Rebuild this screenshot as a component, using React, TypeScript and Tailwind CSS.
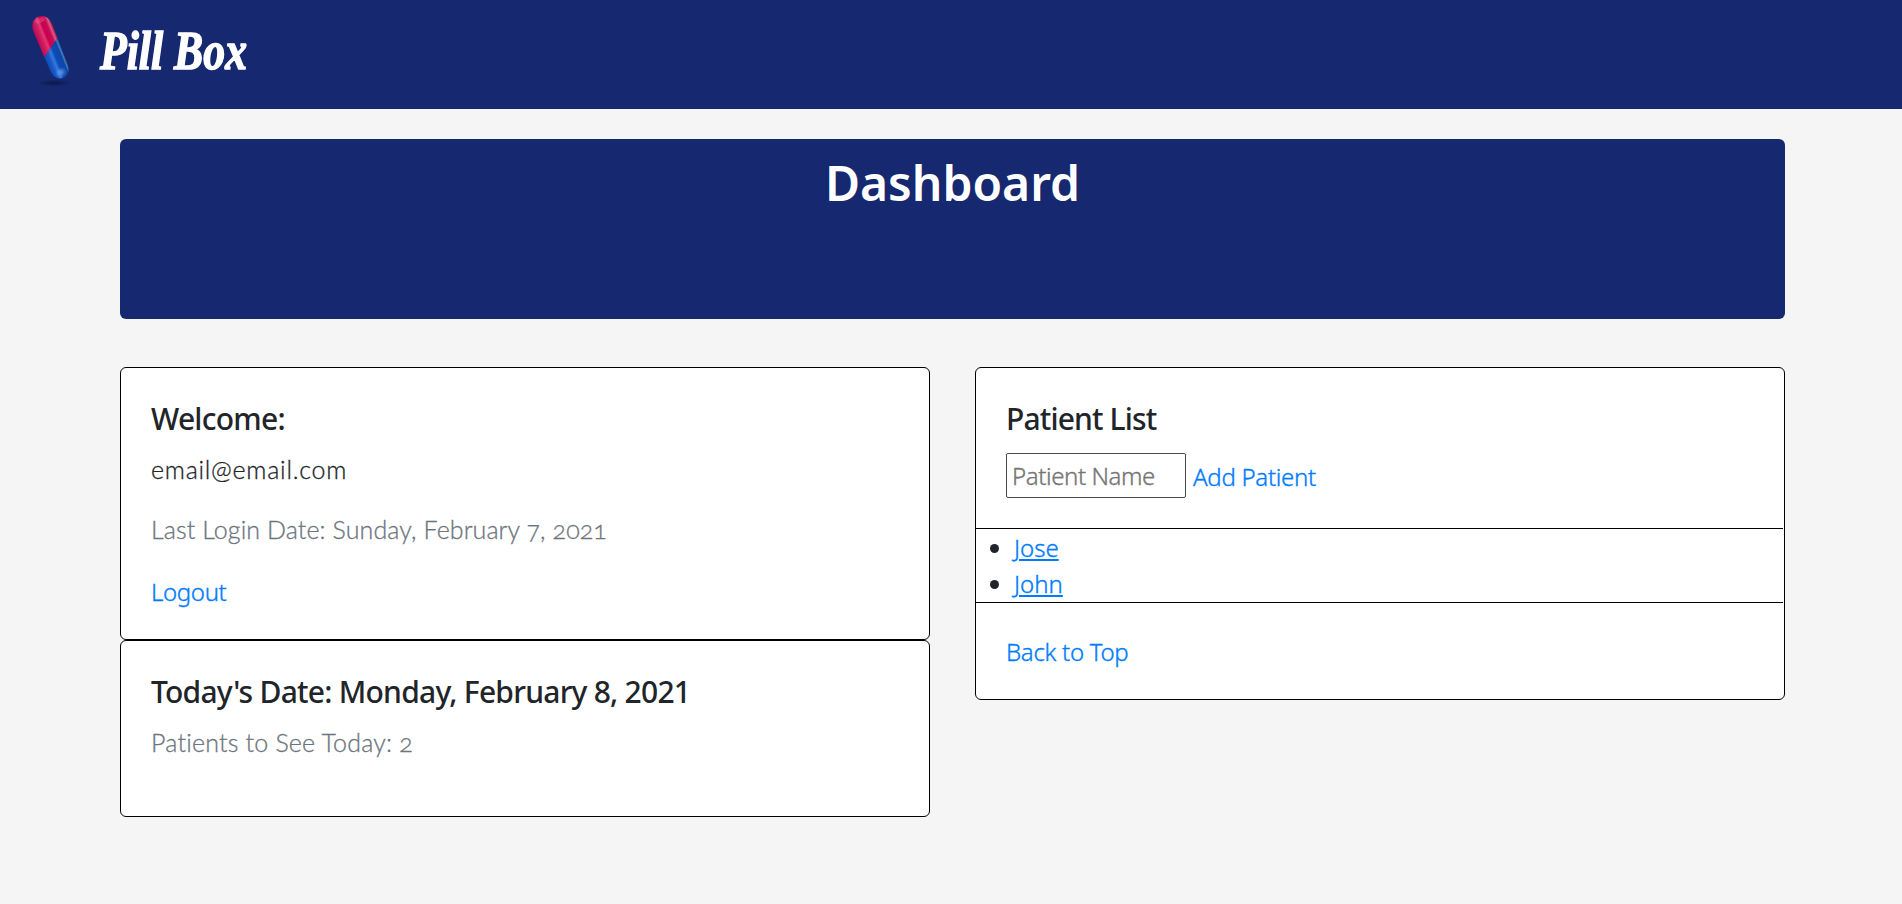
import React from "react";

function PillLogo() {
  return (
    <svg className="h-[80px] w-[50px]" viewBox="0 0 50 80" aria-hidden="true">
      <defs>
        <linearGradient id="red" x1="0" y1="0" x2="1" y2="0">
          <stop offset="0" stopColor="#b80a50" />
          <stop offset="0.25" stopColor="#d41c60" />
          <stop offset="0.4" stopColor="#dd3a74" />
          <stop offset="0.52" stopColor="#c8004f" />
          <stop offset="0.75" stopColor="#c90a54" />
          <stop offset="0.88" stopColor="#d85c88" />
          <stop offset="1" stopColor="#a00844" />
        </linearGradient>
        <linearGradient id="blue" x1="0" y1="0" x2="1" y2="0">
          <stop offset="0" stopColor="#1049ad" />
          <stop offset="0.25" stopColor="#1a5ccc" />
          <stop offset="0.4" stopColor="#3a78dc" />
          <stop offset="0.55" stopColor="#0b4ab8" />
          <stop offset="0.83" stopColor="#0d47a6" />
          <stop offset="0.91" stopColor="#4480bc" />
          <stop offset="1" stopColor="#123c8c" />
        </linearGradient>
        <radialGradient id="shade">
          <stop offset="0" stopColor="#0b1546" stopOpacity="0.9" />
          <stop offset="1" stopColor="#0b1546" stopOpacity="0" />
        </radialGradient>
        <radialGradient id="tip">
          <stop offset="0" stopColor="#6ba4f0" stopOpacity="0.8" />
          <stop offset="1" stopColor="#6ba4f0" stopOpacity="0" />
        </radialGradient>
      </defs>
      <ellipse cx="29" cy="73" rx="17" ry="3.5" fill="url(#shade)" />
      <g transform="translate(25.8 37.2) rotate(-22)">
        <path d="M-9.8 7L-10.2-20C-10.2-28-6-33 0-33S10-28 10-20L9.8-6Z" fill="url(#red)" />
        <path d="M-9.8 7L9.8-6L9.2 22C9 29 5 33 0 33S-9 29-9.2 22Z" fill="url(#blue)" />
        <ellipse cx="0" cy="27" rx="6" ry="5" fill="url(#tip)" />
        <ellipse cx="0" cy="-29" rx="5" ry="2.5" fill="#ea7ca0" opacity="0.3" />
      </g>
    </svg>
  );
}

function Card({ children, className }: { children: React.ReactNode; className: string }) {
  return <section className={`rounded-[6px] border border-black bg-white ${className}`}>{children}</section>;
}

const heading = "text-[30px] leading-[36px] font-medium";
const thin =
  "font-['Lato',sans-serif] text-[25px] font-light oldstyle-nums [font-variant-ligatures:none] [-webkit-text-stroke:0.3px_currentColor]";
const link = "text-[#007bff] font-light [-webkit-text-stroke:0.35px_currentColor]";

export default function App() {
  return (
    <div className="min-h-screen bg-[#f5f5f5] font-['Noto_Sans',sans-serif] text-[24px] leading-[36px] text-[#212529]">
      <header className="flex h-[109px] bg-[#162870] pt-[10px] pl-[25px]">
        <PillLogo />
        <span className="mt-[1px] ml-[25px] h-[80px] origin-left scale-x-[0.81] font-['Liberation_Serif',serif] text-[54px] leading-[80px] font-bold whitespace-nowrap text-white italic [-webkit-text-stroke:1.5px_white]">
          Pill Box
        </span>
      </header>
      <main className="mr-[117px] ml-[120px] pt-[30px]">
        <div className="h-[180px] rounded-[6px] bg-[#162870] pt-[14px] text-center">
          <h1 className="text-[48px] leading-[60px] font-semibold text-white">Dashboard</h1>
        </div>
        <div className="mt-[48px] flex items-start justify-between">
          <div className="w-[810px]">
            <Card className="h-[273px] px-[30px] pt-[33px]">
              <h2 className={`tracking-[-0.75px] ${heading}`}>Welcome:</h2>
              <p className={`mt-[14px] tracking-[0.75px] ${thin}`}>email@email.com</p>
              <p className={`mt-[24px] tracking-[0.1px] text-[#6c757d] ${thin}`}>Last Login Date: Sunday, February 7, 2021</p>
              <a href="#" className={`mt-[27px] block tracking-[-0.35px] ${link}`}>Logout</a>
            </Card>
            <Card className="h-[177px] px-[30px] pt-[33px]">
              <h2 className={`tracking-[-0.75px] ${heading}`}>Today's Date: Monday, February 8, 2021</h2>
              <p className={`mt-[14px] tracking-[0.2px] text-[#6c757d] ${thin}`}>Patients to See Today: 2</p>
            </Card>
          </div>
          <Card className="h-[333px] w-[810px]">
            <div className="h-[160px] px-[30px] pt-[33px]">
              <h2 className={`tracking-[-0.85px] ${heading}`}>Patient List</h2>
              <div className="mt-[16px] flex items-center">
                <input
                  placeholder="Patient Name"
                  className="h-[45px] w-[180px] rounded-[2px] border border-[#4a4a4a] bg-white px-[5px] text-[24px] font-light tracking-[-0.4px] placeholder:text-[#757575] placeholder:[-webkit-text-stroke:0.35px_#757575]"
                />
                <a href="#" className={`mt-[2px] ml-[7px] tracking-[-0.28px] ${link}`}>Add Patient</a>
              </div>
            </div>
            <ul className="mr-px h-[75px] list-disc border-y border-black pt-px pl-[38px]">
              <li><a href="#" className={`underline decoration-2 underline-offset-[2px] ${link}`}>Jose</a></li>
              <li><a href="#" className={`underline decoration-2 underline-offset-[2px] ${link}`}>John</a></li>
            </ul>
            <a href="#" className={`mt-[31px] block px-[30px] tracking-[-0.3px] ${link}`}>Back to Top</a>
          </Card>
        </div>
      </main>
    </div>
  );
}
